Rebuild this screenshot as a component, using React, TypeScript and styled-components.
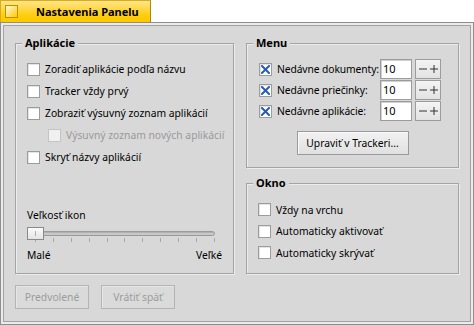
import React from "react";
import styled, { createGlobalStyle } from "styled-components";

const Global = createGlobalStyle`
  html, body { margin: 0; padding: 0; background: #ffffff; }
  body {
    font-family: "Noto Sans", "DejaVu Sans", sans-serif;
    font-size: 10.3px;
    color: #000;
  }
  * { box-sizing: border-box; }
`;

const Window = styled.div`
  width: 474px;
  height: 325px;
  display: flex;
  flex-direction: column;
  background: #ffffff;
`;

const Tab = styled.div`
  width: 151px;
  height: 22px;
  flex: none;
  display: flex;
  align-items: center;
  padding-left: 4px;
  background: linear-gradient(#ffe58c, #ffcd0a 70%, #ffc800);
  border: 1px solid #d6ad1e;
  border-bottom: none;
  border-right-color: #a88a10;
`;

const CloseBox = styled.div`
  width: 13px;
  height: 13px;
  border: 1px solid #b89400;
  background: linear-gradient(135deg, #fffbe8 0%, #ffe27a 45%, #ffcb00 100%);
`;

const TabTitle = styled.span`
  font-weight: 700;
  font-size: 11px;
  margin-left: 18px;
`;

const Frame = styled.div`
  flex: 1;
  border: 1px solid #8e8e8e;
  box-shadow: inset 0 0 0 2px #ebebeb, inset 0 0 0 3px #a2a2a2;
  padding: 4px;
  background: #d8d8d8;
  display: flex;
`;

const Content = styled.div`
  flex: 1;
  display: grid;
  grid-template-columns: 219px 213px;
  grid-template-rows: 231px auto;
  column-gap: 12px;
  row-gap: 11px;
  padding: 16px 10px 11px 10px;
`;

const Group = styled.div<{ $pt?: number; $pl?: number }>`
  position: relative;
  border: 1px solid #a4a4a4;
  box-shadow: inset 1px 1px 0 #ececec, 1px 1px 0 #ececec;
  padding: ${(p) => p.$pt ?? 14}px 11px 0 ${(p) => p.$pl ?? 11}px;
  display: flex;
  flex-direction: column;
`;

const Legend = styled.span`
  position: absolute;
  top: -8px;
  left: 6px;
  padding: 0 3px;
  background: #d8d8d8;
  font-weight: 700;
  font-size: 11px;
  line-height: 14px;
`;

const RightColumn = styled.div`
  display: flex;
  flex-direction: column;
  gap: 15px;
`;

const CheckRow = styled.label<{ $indent?: number; $h?: number; $disabled?: boolean }>`
  display: flex;
  align-items: center;
  height: ${(p) => p.$h ?? 22}px;
  padding-left: ${(p) => p.$indent ?? 0}px;
  gap: 5px;
  color: ${(p) => (p.$disabled ? "#9a9a9a" : "#000")};
  white-space: nowrap;
`;

const Box = styled.span<{ $disabled?: boolean }>`
  width: 13px;
  height: 13px;
  flex: none;
  display: flex;
  align-items: center;
  justify-content: center;
  background: ${(p) => (p.$disabled ? "#f0f0f0" : "#ffffff")};
  border: 1px solid ${(p) => (p.$disabled ? "#c4c4c4" : "#9c9c9c")};
  box-shadow: ${(p) => (p.$disabled ? "none" : "inset 1px 1px 0 #e4e4e4")};
`;

const XMark = () => (
  <svg width="9" height="9" viewBox="0 0 9 9">
    <path d="M1 1 L8 8 M8 1 L1 8" stroke="#2a5cb0" strokeWidth="2" strokeLinecap="square" />
  </svg>
);

const Check = ({
  label,
  checked,
  disabled,
  indent,
  h,
}: {
  label: string;
  checked?: boolean;
  disabled?: boolean;
  indent?: number;
  h?: number;
}) => (
  <CheckRow $indent={indent} $disabled={disabled} $h={h}>
    <Box $disabled={disabled}>{checked && <XMark />}</Box>
    {label}
  </CheckRow>
);

const SliderSection = styled.div`
  margin-top: auto;
  padding-bottom: 11px;
  display: flex;
  flex-direction: column;
`;

const SliderLabel = styled.div`
  line-height: 14px;
`;

const SliderArea = styled.div`
  position: relative;
  height: 22px;
  margin-top: 4px;
  width: 188px;
`;

const Track = styled.div`
  position: absolute;
  left: 0;
  right: 0;
  top: 5px;
  height: 5px;
  border: 1px solid #9a9a9a;
  border-radius: 3px;
  background: #c8c8c8;
  box-shadow: inset 0 1px 0 #b0b0b0;
`;

const Thumb = styled.div`
  position: absolute;
  left: 0;
  top: 1px;
  width: 17px;
  height: 13px;
  border: 1px solid #8a8a8a;
  background: linear-gradient(#fbfbfb, #e4e4e4);
  display: flex;
  justify-content: center;
  align-items: center;
  &::after {
    content: "";
    width: 1px;
    height: 5px;
    background: #b0b0b0;
  }
`;

const Ticks = styled.div`
  position: absolute;
  left: 8px;
  right: 0;
  top: 12px;
  height: 4px;
  display: flex;
  justify-content: space-between;
`;

const Tick = styled.span`
  width: 1px;
  height: 4px;
  background: #a8a8a8;
`;

const SliderEnds = styled.div`
  display: flex;
  justify-content: space-between;
  line-height: 14px;
`;

const MenuRows = styled.div`
  display: flex;
  flex-direction: column;
  gap: 1px;
`;

const MenuRow = styled.div`
  display: flex;
  align-items: center;
  height: 20px;
`;

const MenuLabel = styled.span`
  width: 103px;
  flex: none;
  margin-left: 5px;
  white-space: nowrap;
  letter-spacing: -0.1px;
`;

const NumField = styled.div`
  width: 32px;
  height: 20px;
  background: #fff;
  border: 1px solid #9c9c9c;
  box-shadow: inset 1px 1px 0 #d0d0d0;
  padding-left: 2px;
  line-height: 18px;
  font-size: 11px;
`;

const Stepper = styled.div`
  width: 26px;
  height: 20px;
  margin-left: 3px;
  border: 1px solid #9c9c9c;
  background: linear-gradient(#f4f4f4, #e2e2e2);
  display: flex;
  align-items: center;
  justify-content: center;
`;

const Button = styled.button<{ $w: number; $disabled?: boolean }>`
  width: ${(p) => p.$w}px;
  height: 24px;
  padding: 0;
  font-family: inherit;
  font-size: 10.3px;
  color: ${(p) => (p.$disabled ? "#9c9c9c" : "#000")};
  background: ${(p) =>
    p.$disabled ? "#dadada" : "linear-gradient(#f2f2f2, #e0e0e0)"};
  border: 1px solid ${(p) => (p.$disabled ? "#b4b4b4" : "#9a9a9a")};
  box-shadow: ${(p) => (p.$disabled ? "inset 1px 1px 0 #e6e6e6" : "inset 1px 1px 0 #fafafa")};
`;

const CenterRow = styled.div`
  display: flex;
  justify-content: center;
  margin-top: 10px;
  padding-right: 1px;
`;

const BottomBar = styled.div`
  grid-column: 1 / span 2;
  display: flex;
  gap: 12px;
`;

const StepIcon = () => (
  <svg width="22" height="12" viewBox="0 0 22 12">
    <path d="M2 6 H10 M13 6 H21 M17 2 V10" stroke="#333" strokeWidth="1" />
  </svg>
);

const menuItems = ["Nedávne dokumenty:", "Nedávne priečinky:", "Nedávne aplikácie:"];

export default function App() {
  return (
    <>
      <Global />
      <Window>
        <Tab>
          <CloseBox />
          <TabTitle>Nastavenia Panelu</TabTitle>
        </Tab>
        <Frame>
          <Content>
            <Group>
              <Legend>Aplikácie</Legend>
              <Check label="Zoradiť aplikácie podľa názvu" />
              <Check label="Tracker vždy prvý" />
              <Check label="Zobraziť výsuvný zoznam aplikácií" />
              <Check label="Výsuvný zoznam nových aplikácií" disabled indent={21} />
              <Check label="Skryť názvy aplikácií" />
              <SliderSection>
                <SliderLabel>Veľkosť ikon</SliderLabel>
                <SliderArea>
                  <Track />
                  <Ticks>
                    {Array.from({ length: 11 }).map((_, i) => (
                      <Tick key={i} />
                    ))}
                  </Ticks>
                  <Thumb />
                </SliderArea>
                <SliderEnds>
                  <span>Malé</span>
                  <span>Veľké</span>
                </SliderEnds>
              </SliderSection>
            </Group>
            <RightColumn>
              <Group $pt={15} $pl={12} style={{ height: 125 }}>
                <Legend>Menu</Legend>
                <MenuRows>
                  {menuItems.map((m) => (
                    <MenuRow key={m}>
                      <Box>
                        <XMark />
                      </Box>
                      <MenuLabel>{m}</MenuLabel>
                      <NumField>10</NumField>
                      <Stepper>
                        <StepIcon />
                      </Stepper>
                    </MenuRow>
                  ))}
                </MenuRows>
                <CenterRow>
                  <Button $w={112}>Upraviť v Trackeri...</Button>
                </CenterRow>
              </Group>
              <Group $pt={15} style={{ flex: 1 }}>
                <Legend>Okno</Legend>
                <Check label="Vždy na vrchu" h={21.5} />
                <Check label="Automaticky aktivovať" h={21.5} />
                <Check label="Automaticky skrývať" h={21.5} />
              </Group>
            </RightColumn>
            <BottomBar>
              <Button $w={74} $disabled>Predvolené</Button>
              <Button $w={74} $disabled>Vrátiť späť</Button>
            </BottomBar>
          </Content>
        </Frame>
      </Window>
    </>
  );
}
